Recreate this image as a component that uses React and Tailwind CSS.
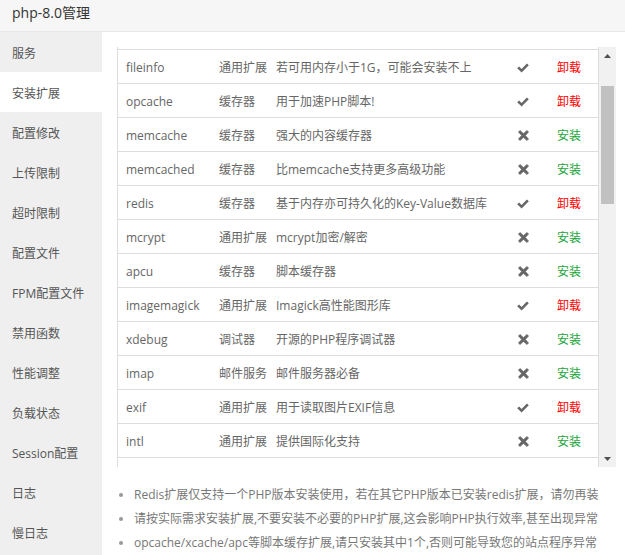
import React, { useLayoutEffect, useRef } from 'react'

const MENU = [
  '服务',
  '安装扩展',
  '配置修改',
  '上传限制',
  '超时限制',
  '配置文件',
  'FPM配置文件',
  '禁用函数',
  '性能调整',
  '负载状态',
  'Session配置',
  '日志',
  '慢日志',
]

const EXTENSIONS = [
  ['ioncube', '通用扩展', '用于解密ioncube加密的代码', false],
  ['fileinfo', '通用扩展', '若可用内存小于1G，可能会安装不上', true],
  ['opcache', '缓存器', '用于加速PHP脚本!', true],
  ['memcache', '缓存器', '强大的内容缓存器', false],
  ['memcached', '缓存器', '比memcache支持更多高级功能', false],
  ['redis', '缓存器', '基于内存亦可持久化的Key-Value数据库', true],
  ['mcrypt', '通用扩展', 'mcrypt加密/解密', false],
  ['apcu', '缓存器', '脚本缓存器', false],
  ['imagemagick', '通用扩展', 'Imagick高性能图形库', true],
  ['xdebug', '调试器', '开源的PHP程序调试器', false],
  ['imap', '邮件服务', '邮件服务器必备', false],
  ['exif', '通用扩展', '用于读取图片EXIF信息', true],
  ['intl', '通用扩展', '提供国际化支持', false],
  ['xsl', '通用扩展', 'xsl解析扩展', false],
  ['swoole4', '通用扩展', '异步、协程、并行的高性能网络通信引擎', false],
  ['ldap', '通用扩展', '轻量目录访问协议', false],
  ['yaf', '框架', '高性能的PHP框架', false],
  ['mongodb', '通用扩展', 'MongoDB驱动', false],
  ['sg16', '加密', 'SourceGuardian加密组件', false],
  ['phalcon5', '框架', '高性能的PHP框架', false],
  ['sqlsrv', '通用扩展', 'SQL Server驱动', false],
  ['pdo_sqlsrv', '通用扩展', 'PDO SQL Server驱动', false],
  ['zstd', '通用扩展', 'zstd压缩算法支持', false],
  ['sodium', '通用扩展', '现代加密库', false],
  ['readline', '通用扩展', '交互式命令行支持', false],
  ['snmp', '通用扩展', 'SNMP协议支持', false],
  ['pgsql', '数据库', 'PostgreSQL驱动', false],
  ['pdo_pgsql', '数据库', 'PDO PostgreSQL驱动', false],
  ['gmp', '通用扩展', '高精度数学运算', false],
  ['bz2', '通用扩展', 'bzip2压缩支持', false],
  ['calendar', '通用扩展', '日历转换函数', false],
  ['sysvsem', '通用扩展', '信号量支持', false],
  ['sysvshm', '通用扩展', '共享内存支持', false],
  ['xmlrpc', '通用扩展', 'XML-RPC支持', false],
  ['psr', '通用扩展', 'PSR接口支持', false],
  ['event', '通用扩展', '事件驱动扩展', false],
  ['yac', '缓存器', '无锁共享内存缓存', false],
  ['igbinary', '通用扩展', '二进制序列化', false],
  ['zip', '通用扩展', 'ZIP压缩包支持', false],
]

const NOTES = [
  'Redis扩展仅支持一个PHP版本安装使用，若在其它PHP版本已安装redis扩展，请勿再装',
  '请按实际需求安装扩展,不要安装不必要的PHP扩展,这会影响PHP执行效率,甚至出现异常',
  'opcache/xcache/apc等脚本缓存扩展,请只安装其中1个,否则可能导致您的站点程序异常',
]

const CheckIcon = () => (
  <svg width="12" height="10" viewBox="0 0 12 10" className="fill-[#666]">
    <path d="M0.2 5.3 L2.1 3.5 L4.6 5.9 L9.9 0.5 L11.8 2.3 L4.6 9.6 Z" />
  </svg>
)

const CrossIcon = () => (
  <svg width="11" height="11" viewBox="0 0 11 11" className="fill-[#666]">
    <path
      d="M2 0.4 L5.5 3.6 L9 0.4 L10.6 2 L7.4 5.5 L10.6 9 L9 10.6 L5.5 7.4 L2 10.6 L0.4 9 L3.6 5.5 L0.4 2 Z"
      strokeLinejoin="round"
      stroke="#666"
      strokeWidth="0.6"
    />
  </svg>
)

const Arrow = ({ up }) => (
  <div className="h-[17px] flex items-center justify-center">
    <svg width="7" height="4" viewBox="0 0 7 4" className="fill-[#505050]">
      {up ? <path d="M0 4 L3.5 0 L7 4 Z" /> : <path d="M0 0 L7 0 L3.5 4 Z" />}
    </svg>
  </div>
)

// Fake scrollbar, drawn to look like the classic desktop one.
const ScrollBar = () => (
  <div className="w-[17px] h-[420px] bg-[#f1f1f1] flex flex-col">
    <Arrow up />
    <div className="flex-1 px-[2px]">
      <div className="mt-[22px] h-[118px] bg-[#c1c1c1]" />
    </div>
    <Arrow />
  </div>
)

const ExtRow = ({ ext }) => {
  const [name, type, desc, installed] = ext
  return (
    <div className="grid grid-cols-[93px_57px_237px_36px_56px] h-[34px] items-center pt-[2px] border-b border-[#ddd] text-[12px] text-[#666]">
      <div className="pl-2 truncate">{name}</div>
      <div className="pl-2 truncate">{type}</div>
      <div className="pl-2 truncate">{desc}</div>
      <div className="flex justify-center">{installed ? <CheckIcon /> : <CrossIcon />}</div>
      <div className="text-center">
        {installed ? <span className="text-[#f00]">卸载</span> : <span className="text-[#20a53a]">安装</span>}
      </div>
    </div>
  )
}

export default function App() {
  const listRef = useRef(null)

  useLayoutEffect(() => {
    // The list is shown scrolled past the header and first row.
    if (listRef.current) listRef.current.scrollTop = 78
  }, [])

  return (
    <div className="w-[625px] h-[555px] overflow-hidden bg-white font-['Open_Sans','Noto_Sans_CJK_SC',sans-serif]">
      <div className="h-[32px] bg-[#f6f6f6] border-b border-[#e6e6e6] pl-3 pt-[2px] text-[14px] leading-[22px] text-[#333]">
        php-8.0管理
      </div>

      <div className="flex h-[523px]">
        <div className="w-[102px] bg-[#efefef] flex flex-col">
          {MENU.map((item) => (
            <div
              key={item}
              className={
                item === '安装扩展'
                  ? 'h-10 shrink-0 flex items-center pl-3 pt-[3px] text-[12px] text-[#555] bg-white'
                  : 'h-10 shrink-0 flex items-center pl-3 pt-[3px] text-[12px] text-[#555]'
              }
            >
              {item}
            </div>
          ))}
        </div>

        <div className="flex-1 pl-[15px] pt-[15px]">
          <div className="flex">
            <div ref={listRef} className="w-[482px] h-[420px] overflow-hidden">
              <div className="border-x border-t border-[#ddd]">
                <div className="grid grid-cols-[93px_57px_237px_36px_56px] h-[46px] items-center border-b border-[#ddd] text-[12px] font-bold text-[#666]">
                  <div className="pl-2">名称</div>
                  <div className="pl-2">类型</div>
                  <div className="pl-2">说明</div>
                  <div className="text-center">状态</div>
                  <div className="text-center">操作</div>
                </div>
                {EXTENSIONS.map((ext) => (
                  <ExtRow key={ext[0]} ext={ext} />
                ))}
              </div>
            </div>
            <ScrollBar />
          </div>

          <ul className="mt-4 pl-[17px] list-disc marker:text-[#999] text-[12px] leading-6 text-[#777] whitespace-nowrap">
            {NOTES.map((note) => (
              <li key={note}>{note}</li>
            ))}
          </ul>
        </div>
      </div>
    </div>
  )
}
